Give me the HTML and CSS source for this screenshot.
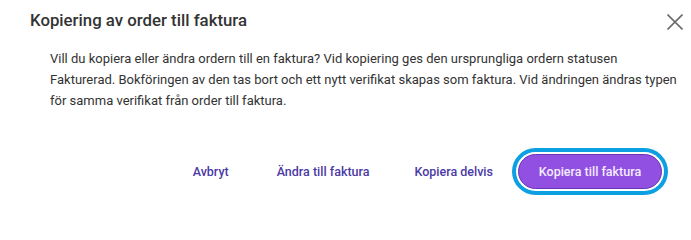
FILE: index.html
```html
<!DOCTYPE html>
<html lang="sv">
<head>
<meta charset="utf-8">
<title>Kopiering av order till faktura</title>
<link rel="stylesheet" href="styles.css">
</head>
<body>
<div class="dialog">
  <div class="header">
    <h2 class="title">Kopiering av order till faktura</h2>
    <button class="close" aria-label="Stäng">
      <svg width="16" height="16" viewBox="0 0 16 16"><path d="M0.5 0.5L15.5 15.5M15.5 0.5L0.5 15.5" stroke="#6b6b6b" stroke-width="1.6" fill="none"/></svg>
    </button>
  </div>
  <p class="text">Vill du kopiera eller ändra ordern till en faktura? Vid kopiering ges den ursprungliga ordern statusen<br>Fakturerad. Bokföringen av den tas bort och ett nytt verifikat skapas som faktura. Vid ändringen ändras typen<br>för samma verifikat från order till faktura.</p>
  <div class="actions">
    <button class="link">Avbryt</button>
    <button class="link">Ändra till faktura</button>
    <button class="link">Kopiera delvis</button>
    <button class="primary">Kopiera till faktura</button>
  </div>
</div>
</body>
</html>
```
FILE: styles.css
```css
html, body {
  margin: 0;
  padding: 0;
  background: #fff;
}
body {
  font-family: Roboto, "Liberation Sans", sans-serif;
  color: #333;
}
.dialog {
  width: 691px;
  height: 204px;
  box-sizing: border-box;
  display: flex;
  flex-direction: column;
}
.header {
  display: flex;
  justify-content: space-between;
  align-items: center;
  padding: 8px 8px 0 30px;
  height: 24px;
}
.title {
  margin: 0;
  font-size: 16.8px;
  font-weight: 500;
  color: #333;
}
.close {
  border: 0;
  background: none;
  padding: 0;
  width: 16px;
  height: 16px;
  display: flex;
  margin-top: 3px;
}
.text {
  margin: 16px 0 0 50px;
  font-size: 13px;
  line-height: 21px;
  color: #333;
  white-space: nowrap;
}
.actions {
  display: flex;
  justify-content: flex-end;
  align-items: center;
  margin-top: 43px;
  padding-right: 29px;
}
.link {
  border: 0;
  background: none;
  font-family: inherit;
  font-size: 12.5px;
  font-weight: 500;
  color: #4b3aa6;
  padding: 0;
  margin-right: 48px;
}
.link:nth-child(2) {
  margin-right: 45px;
}
.link:nth-child(3) {
  margin-right: 25px;
}
.primary {
  font-family: inherit;
  font-size: 12.5px;
  font-weight: 500;
  color: #f4ecff;
  background: #9150e2;
  border: 1px solid #6a35b5;
  border-radius: 18px;
  height: 35px;
  width: 144px;
  padding: 0;
  box-shadow: 0 0 0 2px #fff, 0 0 0 6px #0ca0e2;
}
```
